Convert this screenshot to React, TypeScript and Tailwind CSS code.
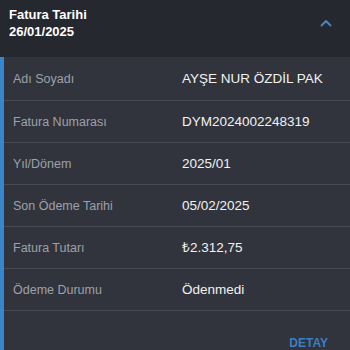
import React from "react";

const rows = [
  { label: "Adı Soyadı", value: "AYŞE NUR ÖZDİL PAK" },
  { label: "Fatura Numarası", value: "DYM2024002248319" },
  { label: "Yıl/Dönem", value: "2025/01" },
  { label: "Son Ödeme Tarihi", value: "05/02/2025" },
  { label: "Fatura Tutarı", value: "₺2.312,75" },
  { label: "Ödeme Durumu", value: "Ödenmedi" },
];

export default function App() {
  return (
    <main className="w-[350px] h-[350px] overflow-hidden bg-[#31343c] font-['Liberation_Sans',Arial,sans-serif]">
      <div className="h-[57px] bg-[#25282f] flex justify-between pl-[9px] pr-[18px] pt-[6px]">
        <div className="text-white font-bold text-[13px] leading-[17px]">
          <div>Fatura Tarihi</div>
          <div>26/01/2025</div>
        </div>
        <svg width="12" height="8" viewBox="0 0 12 8" className="mt-[13px]">
          <path d="M1.5 6.5 L6 2 L10.5 6.5" fill="none" stroke="#4f80b8" strokeWidth="2" strokeLinecap="round" strokeLinejoin="round" />
        </svg>
      </div>
      <div className="flex h-[293px]">
        <div className="w-[4px] bg-[#3a86c8]"></div>
        <div className="flex-1 flex flex-col">
          {rows.map((r, i) => (
            <div
              key={r.label}
              className={
                i === 0
                  ? "h-[44px] flex items-center pt-[2px] border-b border-[#484b54]"
                  : "h-[42px] flex items-center pt-[2px] border-b border-[#484b54]"
              }
            >
              <div className="w-[178px] pl-[9px] text-[12.5px] text-[#9da1a9]">{r.label}</div>
              <div className="text-[13.5px] text-[#f2f2f2]">{r.value}</div>
            </div>
          ))}
          <div className="flex justify-end pr-[22px] pt-[26px]">
            <span className="text-[12px] font-bold text-[#3d7fc1] leading-none">DETAY</span>
          </div>
        </div>
      </div>
    </main>
  );
}
